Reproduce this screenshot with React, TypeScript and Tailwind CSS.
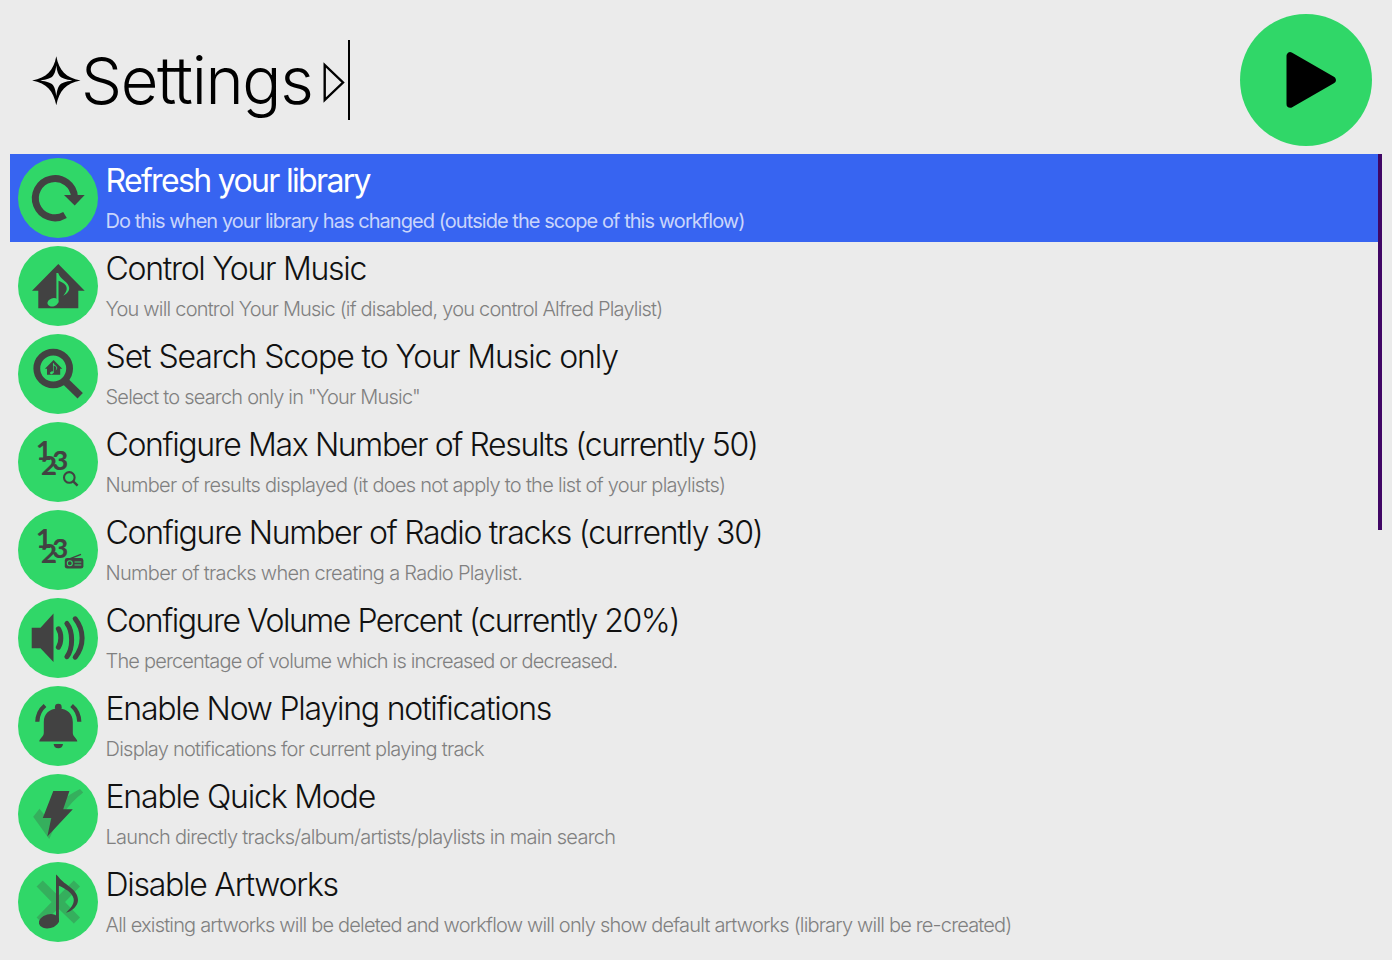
import type { ReactNode } from "react";

const DARK = "#424242";
const GREEN = "#30d768";

function Disc({ children }: { children: ReactNode }) {
  return (
    <svg viewBox="0 0 80 80" className="size-20 shrink-0" aria-hidden="true">
      <circle cx="40" cy="40" r="40" fill={GREEN} />
      {children}
    </svg>
  );
}

function RefreshIcon() {
  return (
    <Disc>
      <path d="M56.5 39A19.6 19.6 0 1 0 47 57" fill="none" stroke={DARK} strokeWidth="7" />
      <path d="M46 37H66.7L56.7 47.6Z" fill={DARK} />
    </Disc>
  );
}

function HouseShape() {
  return (
    <>
      <path d="M40.3 18L66.7 44.7H60.3V62.3H20.3V44.7H14Z" fill={DARK} />
      <ellipse cx="34.9" cy="56.3" rx="5.6" ry="4.1" transform="rotate(-18 34.9 56.3)" fill={GREEN} />
      <path
        d="M38.4 27H40.2C42 33.5 51 36 51.2 42C51.3 45.5 48.5 48 45.3 49.8C48.3 46.2 49.8 43 47.8 39.6C46.2 37 42.4 35.6 40.5 34.8V56.5H38.4Z"
        fill={GREEN}
      />
    </>
  );
}

function HouseIcon() {
  return (
    <Disc>
      <HouseShape />
    </Disc>
  );
}

function ScopeIcon() {
  return (
    <Disc>
      <circle cx="35.2" cy="34.5" r="16.4" fill="none" stroke={DARK} strokeWidth="6.8" />
      <path d="M46 46L62.2 61.8" stroke={DARK} strokeWidth="7.6" />
      <g transform="translate(22.3 20.1) scale(0.33)">
        <HouseShape />
      </g>
    </Disc>
  );
}

function Digits() {
  return (
    <text
      x="17.9 23.1 34.2"
      y="38.3 53.2 47.5"
      fill={DARK}
      stroke={DARK}
      strokeWidth="0.2"
      className="font-['Lato'] text-[27.5px] font-bold"
    >
      123
    </text>
  );
}

function ResultsIcon() {
  return (
    <Disc>
      <Digits />
      <circle cx="51.3" cy="55.4" r="5.3" fill="none" stroke={DARK} strokeWidth="2.1" />
      <path d="M55 59.2L59.6 63.6" stroke={DARK} strokeWidth="2.5" />
    </Disc>
  );
}

function RadioIcon() {
  return (
    <Disc>
      <Digits />
      <rect x="46.8" y="48" width="18.6" height="10.6" rx="2.4" fill={DARK} />
      <path d="M51.5 48.8L63 44.3" stroke={DARK} strokeWidth="1.3" />
      <circle cx="51.8" cy="53.3" r="2.5" fill="none" stroke={GREEN} strokeWidth="1.1" />
      <path d="M56.5 52H63.3M56.5 55H63.3" stroke={GREEN} strokeWidth="1.1" />
    </Disc>
  );
}

function VolumeIcon() {
  return (
    <Disc>
      <path d="M13.7 29.8H22.5L35.5 15.5V64L22.5 50.2H13.7Z" fill={DARK} />
      <g fill="none" stroke={DARK} strokeWidth="5" strokeLinecap="round">
        <path d="M40.4 30.8C43.6 35.4 43.6 44.6 40.4 49.2" />
        <path d="M48.9 25.5C55.2 33.5 55.2 50.5 48.9 58.7" />
        <path d="M57.2 20.8C66.4 32.4 66.4 47.6 57.2 59.2" />
      </g>
    </Disc>
  );
}

function BellIcon() {
  return (
    <Disc>
      <circle cx="40.3" cy="21.2" r="3.4" fill={DARK} />
      <path
        d="M40.3 22.5C49.5 22.5 54.8 28 54.8 36V47C54.8 50.6 59.3 52.6 59.3 55.5H21.3C21.3 52.6 25.8 50.6 25.8 47V36C25.8 28 31.1 22.5 40.3 22.5Z"
        fill={DARK}
      />
      <path d="M35.6 58H45C44.8 60.7 43 62.3 40.3 62.3C37.6 62.3 35.8 60.7 35.6 58Z" fill={DARK} />
      <path d="M19.3 35.8C19.5 28.8 22.2 23.5 27 19.5M61.3 35.8C61.1 28.8 58.4 23.5 53.6 19.5" fill="none" stroke={DARK} strokeWidth="4.2" />
    </Disc>
  );
}

function QuickIcon() {
  return (
    <Disc>
      <path d="M15.2 42.8L21.5 34.8L28.6 43.5C38 30.5 48 22 62 15L65.2 18.4C50 30 39.5 45.5 31.2 65Z" fill={DARK} opacity=".27" />
      <path d="M35.3 17H51.4L45.2 35.3H54.8L29.3 62.5L33.3 44H24.8Z" fill={DARK} />
    </Disc>
  );
}

function ArtworkIcon() {
  return (
    <Disc>
      <path
        d="M24.8 18.6L40.3 33.7L55.8 18.6L62 24.6L47 40.1L62 55.6L55.8 61.6L40.3 46.6L24.8 61.6L18.6 55.6L33.6 40.1L18.6 24.6Z"
        fill={DARK}
        opacity=".27"
      />
      <ellipse cx="31" cy="59.3" rx="10.3" ry="7" transform="rotate(-14 31 59.3)" fill={DARK} />
      <path
        d="M38 12.5C39 13.3 40 14.2 40.8 15.3C46.5 23.3 60 27 60 38C60 43.6 54.3 49.3 48 50.8C53.5 45.5 56.6 41.5 55.6 36.5C54 30.5 47 26.5 40.9 23.8V59.5H38Z"
        fill={DARK}
      />
    </Disc>
  );
}

type Item = {
  title: string;
  titleTracking: string;
  subtitle: string;
  subtitleTracking: string;
  icon: ReactNode;
};

const items: Item[] = [
  {
    title: "Refresh your library",
    titleTracking: "tracking-[-1.67px]",
    subtitle: "Do this when your library has changed (outside the scope of this workflow)",
    subtitleTracking: "tracking-[-0.95px]",
    icon: <RefreshIcon />,
  },
  {
    title: "Control Your Music",
    titleTracking: "tracking-[-1.29px]",
    subtitle: "You will control Your Music (if disabled, you control Alfred Playlist)",
    subtitleTracking: "tracking-[-0.8px]",
    icon: <HouseIcon />,
  },
  {
    title: "Set Search Scope to Your Music only",
    titleTracking: "tracking-[-1.09px]",
    subtitle: 'Select to search only in "Your Music"',
    subtitleTracking: "tracking-[-0.79px]",
    icon: <ScopeIcon />,
  },
  {
    title: "Configure Max Number of Results (currently 50)",
    titleTracking: "tracking-[-1.37px]",
    subtitle: "Number of results displayed (it does not apply to the list of your playlists)",
    subtitleTracking: "tracking-[-0.725px]",
    icon: <ResultsIcon />,
  },
  {
    title: "Configure Number of Radio tracks (currently 30)",
    titleTracking: "tracking-[-1.295px]",
    subtitle: "Number of tracks when creating a Radio Playlist.",
    subtitleTracking: "tracking-[-0.69px]",
    icon: <RadioIcon />,
  },
  {
    title: "Configure Volume Percent (currently 20%)",
    titleTracking: "tracking-[-1.47px]",
    subtitle: "The percentage of volume which is increased or decreased.",
    subtitleTracking: "tracking-[-0.82px]",
    icon: <VolumeIcon />,
  },
  {
    title: "Enable Now Playing notifications",
    titleTracking: "tracking-[-1.23px]",
    subtitle: "Display notifications for current playing track",
    subtitleTracking: "tracking-[-0.75px]",
    icon: <BellIcon />,
  },
  {
    title: "Enable Quick Mode",
    titleTracking: "tracking-[-1.19px]",
    subtitle: "Launch directly tracks/album/artists/playlists in main search",
    subtitleTracking: "tracking-[-0.71px]",
    icon: <QuickIcon />,
  },
  {
    title: "Disable Artworks",
    titleTracking: "tracking-[-1.25px]",
    subtitle:
      "All existing artworks will be deleted and workflow will only show default artworks (library will be re-created)",
    subtitleTracking: "tracking-[-0.815px]",
    icon: <ArtworkIcon />,
  },
];

function Row({ item, selected }: { item: Item; selected: boolean }) {
  return (
    <li className={`flex h-[88px] items-start pl-2 ${selected ? "bg-[#3764f1] font-normal" : ""}`}>
      <div className="pt-1">{item.icon}</div>
      <div className="pt-2 pl-[7.5px] whitespace-nowrap">
        <div className={`text-[32px] leading-[38px] ${item.titleTracking} ${selected ? "text-white" : "text-[#111111]"}`}>
          {item.title}
        </div>
        <div
          className={`text-[20px] leading-[43px] ${item.subtitleTracking} ${selected ? "text-[#c9d5fb]" : "text-[#808080]"}`}
        >
          {item.subtitle}
        </div>
      </div>
    </li>
  );
}

export default function App() {
  return (
    <main className="flex h-[960px] w-[1392px] flex-col overflow-hidden bg-[#ebebeb] font-['Inter','Liberation_Sans',sans-serif] font-light">
      <header className="flex h-[154px] shrink-0 items-start justify-between pr-5 pl-8">
        <div className="flex h-[120px] items-end">
          <div className="flex h-20 items-center">
            <svg viewBox="0 0 49 50" className="mt-0.5 h-[50px] w-[49px]" aria-hidden="true">
              <path
                fillRule="evenodd"
                d="M24.3 .3C27.2 15 33.8 21.6 48.5 24.5C33.8 27.6 27.2 34.6 24.3 49.3C21.4 34.6 14.8 27.6 .1 24.5C14.8 21.6 21.4 15 24.3 .3ZM24.3 9.5C23.4 16 22.3 18.4 20.4 20.6C18.2 22.4 15 23.6 8.3 24.5C15 25.5 18.2 26.6 20.4 28.5C22.3 30.6 23.4 33.5 24.3 40C25.2 33.5 26.3 30.6 28.2 28.5C30.4 26.6 33.6 25.5 40.3 24.5C33.6 23.6 30.4 22.4 28.2 20.6C26.3 18.4 25.2 16 24.3 9.5Z"
              />
            </svg>
            <h1 className="w-[242px] pt-px text-[65px] leading-[80px] font-[350] tracking-[-1.35px] text-black">
              Settings
            </h1>
            <svg viewBox="0 0 22 44" className="mt-1.5 h-11 w-[22px]" aria-hidden="true">
              <path d="M1.7 4V39L20 21.5Z" fill="none" stroke="black" strokeWidth="2.4" />
            </svg>
          </div>
          <div className="ml-[3px] h-20 w-0.5 bg-black" />
        </div>
        <svg viewBox="0 0 132 132" className="mt-3.5 size-[132px]" aria-label="Play">
          <circle cx="66" cy="66" r="66" fill={GREEN} />
          <path d="M50.3 42V90L92 66Z" stroke="black" strokeWidth="7.6" strokeLinejoin="round" />
        </svg>
      </header>
      <div className="flex px-2.5">
        <ul className="w-[1368px]">
          {items.map((item, index) => (
            <Row key={item.title} item={item} selected={index === 0} />
          ))}
        </ul>
        <div className="h-[376px] w-1 bg-[#400665]" />
      </div>
    </main>
  );
}
